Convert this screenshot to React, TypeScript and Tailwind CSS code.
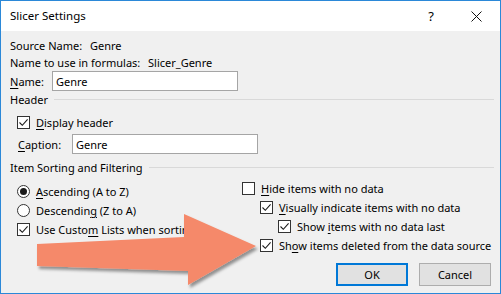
import React from "react"

function Check({ checked }: { checked?: boolean }) {
    return (
        <span className="w-[13px] h-[13px] border border-[#333333] bg-white flex items-center justify-center shrink-0">
            {checked && (
                <svg width="11" height="11" viewBox="0 0 11 11">
                    <path d="M1.5 5.5 L4.3 8.3 L9.6 2.4" fill="none" stroke="#1a1a1a" strokeWidth="1.1" />
                </svg>
            )}
        </span>
    )
}

function Radio({ checked }: { checked?: boolean }) {
    return (
        <span className="w-[13px] h-[13px] rounded-full border border-[#333333] bg-white flex items-center justify-center shrink-0">
            {checked && <span className="w-[7px] h-[7px] rounded-full bg-[#1a1a1a]" />}
        </span>
    )
}

function Row({ children, className = "" }: { children: React.ReactNode; className?: string }) {
    return <div className={"h-[19px] flex items-center gap-[6px] whitespace-nowrap " + className}>{children}</div>
}

export default function App() {
    return (
        <div className="relative w-[501px] h-[294px] border border-[#2b88d8] bg-[#f0f0f0] overflow-hidden text-[11px] leading-none text-black whitespace-nowrap font-['Noto_Sans',sans-serif]">
            {/* title bar */}
            <div className="h-[30px] bg-white flex items-center pl-[9px]">
                <span className="text-[11.5px]">Slicer Settings</span>
                <span className="ml-auto text-[13px]">?</span>
                <svg className="ml-[37px] mr-[18px]" width="11" height="11" viewBox="0 0 11 11">
                    <path d="M0.5 0.5 L10.5 10.5 M10.5 0.5 L0.5 10.5" stroke="#111" strokeWidth="1" />
                </svg>
            </div>

            <div className="flex flex-col pl-[9px] pr-[6px] pt-[6px]">
                <div className="h-[17px] flex items-center">
                    <span className="w-[80px] shrink-0">Source Name:</span>
                    <span>Genre</span>
                </div>
                <div className="h-[17px] flex items-center">
                    <span className="w-[138px] shrink-0">Name to use in formulas:</span>
                    <span>Slicer_Genre</span>
                </div>
                <div className="h-[20px] flex items-center">
                    <span className="w-[42px] shrink-0"><u className="underline-offset-2">N</u>ame:</span>
                    <div className="w-[186px] h-[20px] bg-white border border-[#a5a5a5] flex items-center pl-[3px]">Genre</div>
                </div>
                <div className="h-[17px] flex items-center">
                    <span>Header</span>
                    <div className="flex-1 ml-[6px] border-t border-[#d9d9d9]" />
                </div>
                <div className="pl-[7px]">
                    <Row className="mt-[5px]">
                        <Check checked />
                        <span><u className="underline-offset-2">D</u>isplay header</span>
                    </Row>
                    <div className="h-[20px] mt-[2px] flex items-center">
                        <span className="w-[55px] shrink-0 pl-[1px]"><u className="underline-offset-2">C</u>aption:</span>
                        <div className="w-[186px] h-[20px] bg-white border border-[#a5a5a5] flex items-center pl-[3px]">Genre</div>
                    </div>
                </div>
                <div className="h-[17px] mt-[5px] flex items-center">
                    <span>Item Sorting and Filtering</span>
                    <div className="flex-1 ml-[6px] border-t border-[#d9d9d9]" />
                </div>

                <div className="flex">
                    <div className="w-[232px] shrink-0 pl-[7px] pt-[6px]">
                        <Row>
                            <Radio checked />
                            <span><u className="underline-offset-2">A</u>scending (A to Z)</span>
                        </Row>
                        <Row>
                            <Radio />
                            <span>Descendin<u className="underline-offset-2">g</u> (Z to A)</span>
                        </Row>
                        <Row>
                            <Check checked />
                            <span>Use Custo<u className="underline-offset-2">m</u> Lists when sorting</span>
                        </Row>
                    </div>
                    <div className="pt-[3px]">
                        <Row>
                            <Check />
                            <span><u className="underline-offset-2">H</u>ide items with no data</span>
                        </Row>
                        <Row className="pl-[18px]">
                            <Check checked />
                            <span><u className="underline-offset-2">V</u>isually indicate items with no data</span>
                        </Row>
                        <Row className="pl-[36px]">
                            <Check checked />
                            <span>Show <u className="underline-offset-2">i</u>tems with no data last</span>
                        </Row>
                        <Row className="pl-[18px]">
                            <Check checked />
                            <span>Sh<u className="underline-offset-2">o</u>w items deleted from the data source</span>
                        </Row>
                    </div>
                </div>

                <div className="flex justify-end gap-[11px] mt-[8px] mr-[3px]">
                    <button className="w-[72px] h-[23px] border-2 border-[#0078d7] bg-[#e1e1e1] flex items-center justify-center">OK</button>
                    <button className="w-[72px] h-[23px] border border-[#adadad] bg-[#e1e1e1] flex items-center justify-center">Cancel</button>
                </div>
            </div>

            {/* orange callout arrow */}
            <svg className="absolute left-0 top-0 pointer-events-none" width="501" height="294" viewBox="0 0 501 294">
                <defs>
                    <filter id="sh" x="-20%" y="-20%" width="140%" height="140%">
                        <feDropShadow dx="2" dy="3" stdDeviation="1.8" floodColor="#000" floodOpacity="0.4" />
                    </filter>
                </defs>
                <polygon
                    points="36,243 183,236 183,213 255,245 187,284 187,270 36,265"
                    fill="#f5896a"
                    filter="url(#sh)"
                />
            </svg>
        </div>
    )
}
